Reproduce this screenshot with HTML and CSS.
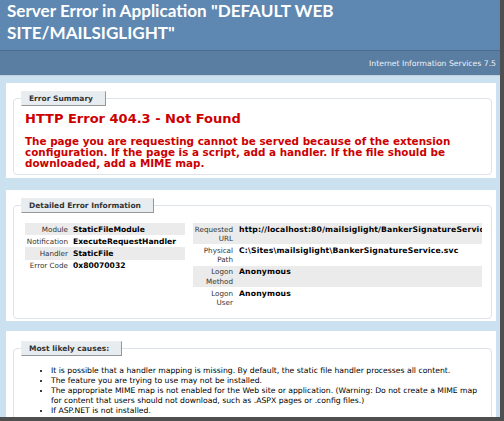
FILE: index.html
```html
<!DOCTYPE html>
<html>
<head>
<meta charset="utf-8">
<title>IIS 7.5 Detailed Error - 404.3 - Not Found</title>
<link rel="stylesheet" href="styles.css">
</head>
<body>
<div class="window">
  <div class="header">
    <h1 class="title">Server Error in Application "DEFAULT WEB SITE/MAILSIGLIGHT"</h1>
  </div>
  <div class="server-version">Internet Information Services 7.5</div>
  <div class="content">
    <div class="panel panel-summary">
      <fieldset class="box">
        <legend class="box-legend">Error Summary</legend>
        <h2 class="error-title">HTTP Error 404.3 - Not Found</h2>
        <h3 class="error-text">The page you are requesting cannot be served because of the extension configuration. If the page is a script, add a handler. If the file should be downloaded, add a MIME map.</h3>
      </fieldset>
    </div>
    <div class="panel panel-details">
      <fieldset class="box">
        <legend class="box-legend">Detailed Error Information</legend>
        <div class="details">
          <table class="details-left">
            <tr class="alt"><th>Module</th><td>StaticFileModule</td></tr>
            <tr><th>Notification</th><td>ExecuteRequestHandler</td></tr>
            <tr class="alt"><th>Handler</th><td>StaticFile</td></tr>
            <tr><th>Error Code</th><td>0x80070032</td></tr>
          </table>
          <table class="details-right">
            <tr class="alt"><th>Requested URL</th><td>http://localhost:80/mailsiglight/BankerSignatureService.svc</td></tr>
            <tr><th>Physical Path</th><td>C:\Sites\mailsiglight\BankerSignatureService.svc</td></tr>
            <tr class="alt"><th>Logon Method</th><td>Anonymous</td></tr>
            <tr><th>Logon User</th><td>Anonymous</td></tr>
          </table>
        </div>
      </fieldset>
    </div>
    <div class="panel panel-causes">
      <fieldset class="box">
        <legend class="box-legend">Most likely causes:</legend>
        <ul class="causes">
          <li>It is possible that a handler mapping is missing. By default, the static file handler processes all content.</li>
          <li>The feature you are trying to use may not be installed.</li>
          <li>The appropriate MIME map is not enabled for the Web site or application. (Warning: Do not create a MIME map for content that users should not download, such as .ASPX pages or .config files.)</li>
          <li>If ASP.NET is not installed.</li>
        </ul>
      </fieldset>
    </div>
  </div>
</div>
</body>
</html>
```

FILE: styles.css
```css
html, body {
  margin: 0;
  padding: 0;
}
body {
  background: #4f4f4f;
  width: 504px;
  height: 421px;
  overflow: hidden;
  font-family: "DejaVu Sans", Verdana, sans-serif;
}
.window {
  width: 500px;
  height: 417px;
  overflow: hidden;
  background: #cbe1ef;
}
.header {
  background: #5e88b2;
  height: 44px;
  padding: 0 0 6px 7px;
}
.title {
  margin: 0;
  max-width: 440px;
  font-family: "Lato", "Open Sans", sans-serif;
  font-weight: 700;
  font-size: 17.1px;
  line-height: 22px;
  color: #ffffff;
}
.server-version {
  height: 24px;
  border-top: 1px solid #4a6c8e;
  border-bottom: 1px solid #c1cfdd;
  background: #5a7da2;
  display: flex;
  align-items: center;
  justify-content: flex-end;
  padding-right: 4px;
  color: #eef2f6;
  font-size: 7.7px;
}
.content {
  padding-left: 6px;
  width: 490px;
}
.panel {
  background: #ffffff;
  padding: 8px 4px 2px 7px;
}
.panel-summary { margin-top: 7px; padding-bottom: 3px; }
.panel-details { margin-top: 12px; padding-bottom: 2px; }
.panel-causes { margin-top: 10px; padding-top: 10px; }
.box {
  margin: 0;
  border: 1px solid #dde3e9;
  border-radius: 4px;
  padding: 0 10px 5px 11px;
  min-width: 0;
}
.panel-details .box { padding-bottom: 9px; }
.box-legend {
  margin-left: -4px;
  padding: 0 12px 0 7px;
  height: 13px;
  line-height: 13px;
  background: #e7ecf0;
  border-top: 1px solid #ededed;
  border-left: 1px solid #ededed;
  border-right: 1px solid #969696;
  border-bottom: 1px solid #969696;
  color: #333333;
  font-weight: 700;
  font-size: 7.5px;
}
.error-title {
  margin: 5px 0 0 0;
  color: #cc0000;
  font-size: 13px;
  line-height: 16px;
  font-weight: 700;
}
.error-text {
  margin: 9px 0 0 0;
  color: #cc0000;
  font-size: 10.4px;
  line-height: 11px;
  font-weight: 700;
}
.details {
  display: flex;
  align-items: flex-start;
  gap: 8px;
  margin-top: 10px;
}
.details table {
  border-collapse: collapse;
  table-layout: fixed;
  line-height: 9.2px;
  color: #000;
}
.details-left { width: 160px; flex: none; }
.details-right { width: 289px; flex: none; }
.details th {
  text-align: right;
  font-weight: 400;
  font-size: 7.2px;
  color: #333333;
  padding: 1.5px 5px 1.5px 0;
  vertical-align: top;
}
.details td {
  font-weight: 700;
  font-size: 7.6px;
  padding: 1.5px 0;
  vertical-align: top;
  white-space: nowrap;
  overflow: hidden;
}
.details-left th { width: 43px; }
.details-right th { width: 40px; padding-right: 6px; }
.details-right td { font-size: 7.7px; letter-spacing: 0.16px; }
.details tr.alt th, .details tr.alt td { background: #ebebeb; }
.causes {
  margin: 10px 0 0 0;
  padding-left: 26px;
  font-size: 7.7px;
  line-height: 10px;
  color: #000;
}
```
